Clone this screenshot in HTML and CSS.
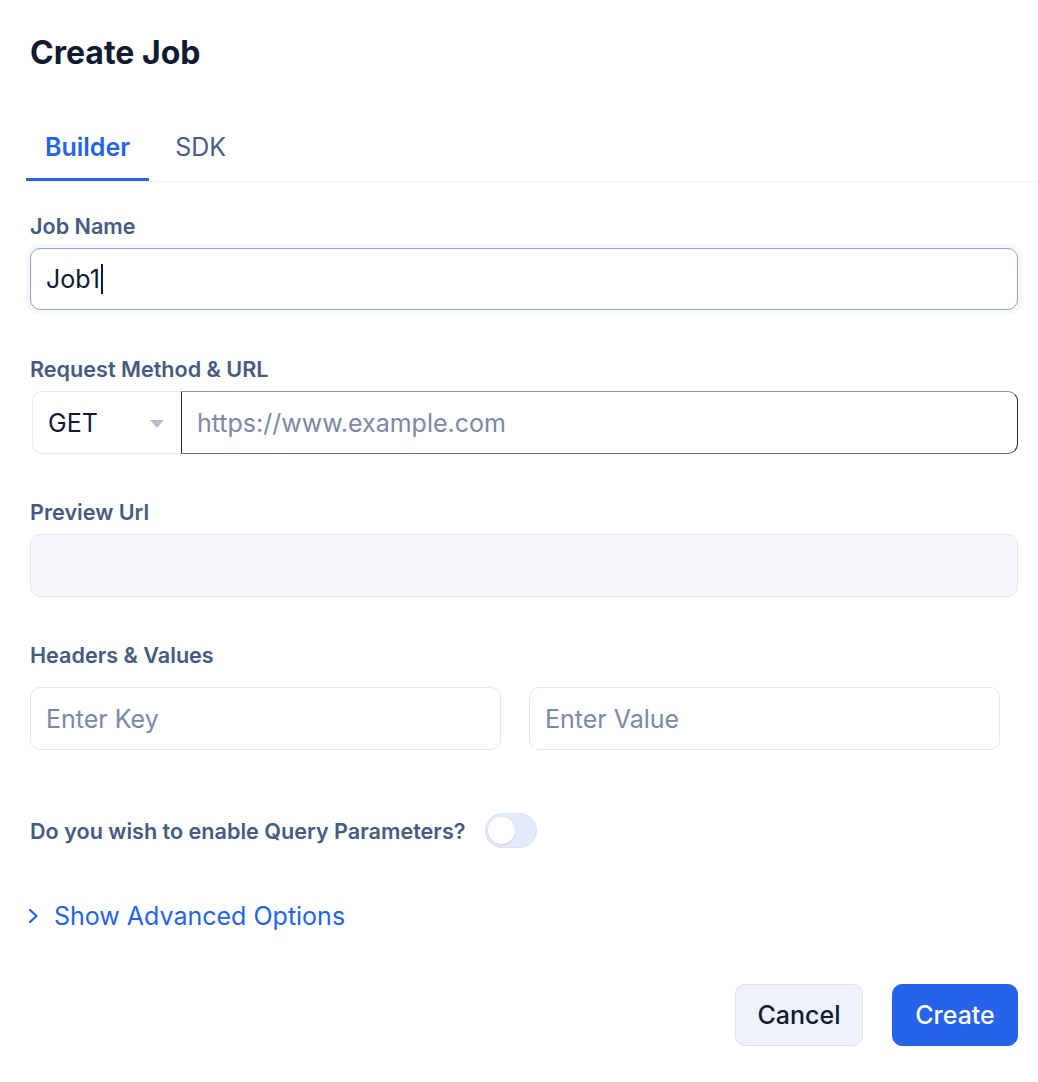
FILE: index.html
```html
<!DOCTYPE html>
<html lang="en">
<head>
<meta charset="utf-8">
<title>Create Job</title>
<link rel="stylesheet" href="styles.css">
</head>
<body>
<div class="page">
  <h1 class="title">Create Job</h1>
  <div class="tabs">
    <div class="tab tab-active">Builder</div>
    <div class="tab">SDK</div>
  </div>

  <div class="field field-first">
    <div class="label">Job Name</div>
    <div class="input input-focus"><span class="value">Job1</span><span class="caret"></span></div>
  </div>

  <div class="field field-method">
    <div class="label">Request Method &amp; URL</div>
    <div class="method-row">
      <div class="select">
        <span class="value">GET</span>
        <svg class="tri" width="14" height="8" viewBox="0 0 14 8"><path d="M0 0 H14 L7 8 Z" fill="#b6bdcb"/></svg>
      </div>
      <div class="url"><span class="placeholder">https://www.example.com</span></div>
    </div>
  </div>

  <div class="field">
    <div class="label">Preview Url</div>
    <div class="input input-disabled"></div>
  </div>

  <div class="field">
    <div class="label label-headers">Headers &amp; Values</div>
    <div class="kv-row">
      <div class="input"><span class="placeholder">Enter Key</span></div>
      <div class="input"><span class="placeholder">Enter Value</span></div>
    </div>
  </div>

  <div class="toggle-row">
    <span class="label toggle-label">Do you wish to enable Query Parameters?</span>
    <span class="switch"><span class="knob"></span></span>
  </div>

  <div class="advanced">
    <svg class="chev" width="11" height="16" viewBox="0 0 11 16"><path d="M2 2 L8.5 8 L2 14" fill="none" stroke="#2563eb" stroke-width="2.2" stroke-linecap="round" stroke-linejoin="round"/></svg>
    <span>Show Advanced Options</span>
  </div>

  <div class="actions">
    <button class="btn btn-cancel">Cancel</button>
    <button class="btn btn-create">Create</button>
  </div>
</div>
</body>
</html>
```

FILE: styles.css
```css
* { box-sizing: border-box; }
html, body { margin: 0; padding: 0; background: #ffffff; }
body {
  font-family: Inter, "Noto Sans", "Liberation Sans", sans-serif;
  color: #0f1b33;
}
.page {
  padding: 0 20px 0 30px;
  width: 1038px;
}
.title {
  margin: 0;
  padding-top: 34px;
  font-size: 32px;
  line-height: 38px;
  font-weight: 700;
  color: #0f1b33;
}
.tabs {
  display: flex;
  gap: 7px;
  margin: 43px -20px 0 -4px;
  border-bottom: 1px solid #eef1f6;
}
.tab {
  padding: 18px 19px 17px;
  font-size: 25px;
  line-height: 28px;
  font-weight: 400;
  color: #4b5d82;
  border-bottom: 3px solid transparent;
}
.tab-active {
  color: #2563eb;
  font-weight: 600;
  border-bottom-color: #2563eb;
}
.field { margin-top: 45px; }
.field-first { margin-top: 31px; }
.field-method { margin-top: 46px; }
.label {
  font-size: 21.6px;
  line-height: 26px;
  font-weight: 600;
  color: #475a7f;
  margin-bottom: 9px;
}
.label-headers { margin-bottom: 19px; }
.input {
  height: 63px;
  border: 1px solid #e3e8f0;
  border-radius: 10px;
  background: #fff;
  display: flex;
  align-items: center;
  padding: 0 15px;
  font-size: 25px;
}
.input-focus {
  height: 62px;
  border-color: #86a5e6;
  box-shadow: 0 0 0 4px #f7f8fb;
}
.value { color: #0f1b33; font-size: 25px; }
.caret {
  display: inline-block;
  width: 2px;
  height: 30px;
  background: #0f1b33;
  margin-left: 1px;
}
.placeholder { color: #7b89a5; font-size: 25px; }
.input-disabled { background: #f5f7fb; }
.method-row {
  display: flex;
  height: 63px;
  margin-left: 2px;
}
.select {
  width: 149px;
  border: 1px solid #e6eaf1;
  border-right: none;
  border-radius: 10px 0 0 10px;
  display: flex;
  align-items: center;
  justify-content: space-between;
  padding: 0 17px 0 15px;
  background: #fff;
}
.url {
  flex: 1;
  border: 1px solid #1e293b;
  border-top-color: #8c929e;
  border-bottom-color: #5f6675;
  border-radius: 0 10px 10px 0;
  display: flex;
  align-items: center;
  padding: 0 15px;
}
.tri { margin-top: 2px; }
.kv-row {
  display: grid;
  grid-template-columns: 471px 471px;
  column-gap: 28px;
}
.toggle-row {
  margin-top: 63px;
  display: flex;
  align-items: center;
  height: 35px;
}
.toggle-label { margin: 0; }
.switch {
  margin-left: 19px;
  width: 52px;
  height: 35px;
  border-radius: 18px;
  background: #e5ebfb;
  border: 1px solid #dbe2f4;
  display: flex;
  align-items: center;
  padding-left: 2px;
}
.knob {
  width: 27px;
  height: 27px;
  border-radius: 50%;
  background: #fff;
  box-shadow: 0 1px 2px rgba(30, 41, 59, 0.12);
}
.advanced {
  margin-top: 52px;
  display: flex;
  align-items: center;
  gap: 15px;
  font-size: 25px;
  line-height: 32px;
  color: #2563eb;
  margin-left: -2px;
}
.actions {
  display: flex;
  justify-content: flex-end;
  gap: 29px;
  margin-top: 52px;
}
.btn {
  height: 62px;
  border-radius: 10px;
  font-family: inherit;
  font-size: 25px;
  font-weight: 500;
  padding: 0;
  cursor: pointer;
}
.btn-cancel {
  width: 128px;
  background: #eef2fb;
  border: 1px solid #dde3ee;
  color: #0f1b33;
}
.btn-create {
  width: 126px;
  background: #2563eb;
  border: 1px solid #2563eb;
  color: #fff;
}
```
